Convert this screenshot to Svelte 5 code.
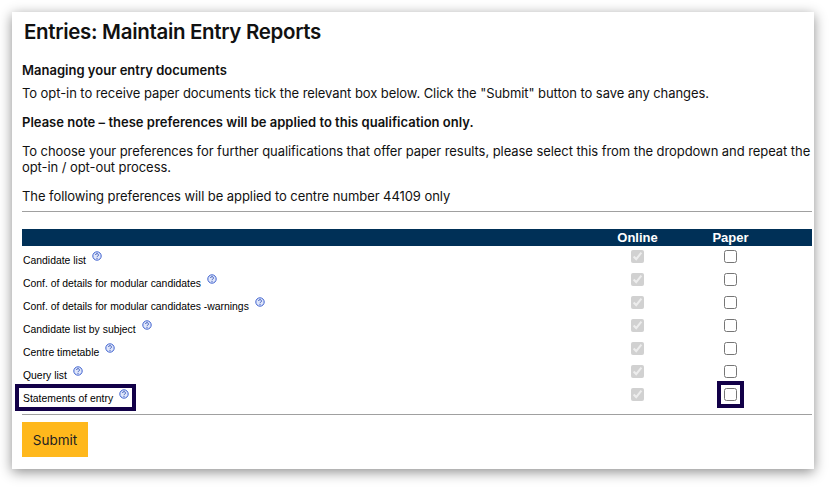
<script>
  const rows = [
    'Candidate list',
    'Conf. of details for modular candidates',
    'Conf. of details for modular candidates -warnings',
    'Candidate list by subject',
    'Centre timetable',
    'Query list',
    'Statements of entry'
  ];
</script>

<div class="page">
  <main class="card">
    <h1>Entries: Maintain Entry Reports</h1>
    <p class="lead"><strong>Managing your entry documents</strong></p>
    <p class="intro">To opt-in to receive paper documents tick the relevant box below. Click the "Submit" button to save any changes.</p>
    <p class="note"><strong>Please note – these preferences will be applied to this qualification only.</strong></p>
    <p class="choose">To choose your preferences for further qualifications that offer paper results, please select this from the dropdown and repeat the opt-in / opt-out process.</p>
    <p class="centre">The following preferences will be applied to centre number 44109 only</p>
    <hr class="rule-top" />
    <div class="head"><span class="h-online">Online</span><span class="h-paper">Paper</span></div>
    {#each rows as label, i}
      <div class="row">
        <div class="label" class:focus={i === 6}>
          <span>{label}</span>
          <svg class="help" viewBox="0 0 10 10" aria-hidden="true">
            <circle cx="5" cy="5" r="4.2" fill="#dfe6fa" stroke="#3f62cf" stroke-width="1" />
            <path d="M3.6 4a1.4 1.4 0 1 1 2.1 1.2c-.5.3-.7.5-.7 1" fill="none" stroke="#2f4fb5" stroke-width="0.9" />
            <circle cx="5" cy="7.5" r="0.55" fill="#2f4fb5" />
          </svg>
        </div>
        <div class="online"><input type="checkbox" checked disabled /></div>
        <div class="paper"><input type="checkbox" class:focus-box={i === 6} /></div>
      </div>
    {/each}
    <hr class="rule-bottom" />
    <button type="button" class="submit">Submit</button>
  </main>
</div>

<style>
  :global(body) {
    margin: 0;
    background: #fff;
  }
  .page {
    box-sizing: border-box;
    height: 487px;
    padding: 12px 0 0 12px;
    overflow: hidden;
  }
  .card {
    box-sizing: border-box;
    width: 802px;
    height: 457px;
    padding: 7px 2px 0 10px;
    background: #fff;
    box-shadow: 0 3px 12px rgba(0, 0, 0, 0.45);
    font-family: Inter, sans-serif;
    color: #111;
  }
  h1 {
    margin: 0 0 0 2px;
    font-size: 20.5px;
    line-height: 25px;
    font-weight: 600;
    letter-spacing: -0.32px;
  }
  p {
    margin: 0;
    font-size: 13px;
    line-height: 16px;
    letter-spacing: -0.068px;
  }
  strong {
    font-weight: 600;
    letter-spacing: 0.01px;
  }
  .lead {
    margin-top: 18px;
  }
  .intro {
    margin-top: 7px;
  }
  .note,
  .choose,
  .centre {
    margin-top: 13px;
  }
  hr {
    border: 0;
    height: 1px;
    margin: 0;
    background: #a0a0a0;
  }
  .rule-top {
    margin-top: 7px;
  }
  .head,
  .row {
    display: grid;
    grid-template-columns: 1fr 93px 93px 35px;
  }
  .head {
    margin-top: 17px;
    height: 17px;
    background: #003057;
    color: #fff;
    font-family: "Liberation Sans", sans-serif;
    font-size: 13px;
    font-weight: 700;
    line-height: 17px;
    text-align: center;
  }
  .h-online {
    grid-column: 2;
  }
  .h-paper {
    grid-column: 3;
  }
  .row {
    height: 23px;
  }
  .label {
    justify-self: start;
    box-sizing: border-box;
    height: 19px;
    margin: 4px 0 0 -3px;
    padding: 0 3px 0 4px;
    display: flex;
    align-items: flex-start;
    font-family: "Liberation Sans", sans-serif;
    font-size: 10.4px;
    line-height: 22px;
    color: #000;
  }
  .help {
    width: 10px;
    height: 10px;
    margin: 1px 0 0 6px;
  }
  .online,
  .paper {
    display: flex;
    justify-content: center;
    padding-top: 4px;
  }
  .online {
    grid-column: 2;
  }
  .paper {
    grid-column: 3;
  }
  input {
    width: 13px;
    height: 13px;
    margin: 0;
    display: block;
  }
  .focus {
    outline: 4px solid #120048;
  }
  .focus-box {
    outline: 4px solid #120048;
    outline-offset: 3px;
  }
  .rule-bottom {
    margin-top: 7px;
  }
  .submit {
    display: block;
    margin-top: 7px;
    width: 66px;
    height: 35px;
    padding: 0;
    border: 0;
    background: #ffb81c;
    color: #222;
    font-family: Inter, sans-serif;
    font-size: 13.5px;
  }
</style>
